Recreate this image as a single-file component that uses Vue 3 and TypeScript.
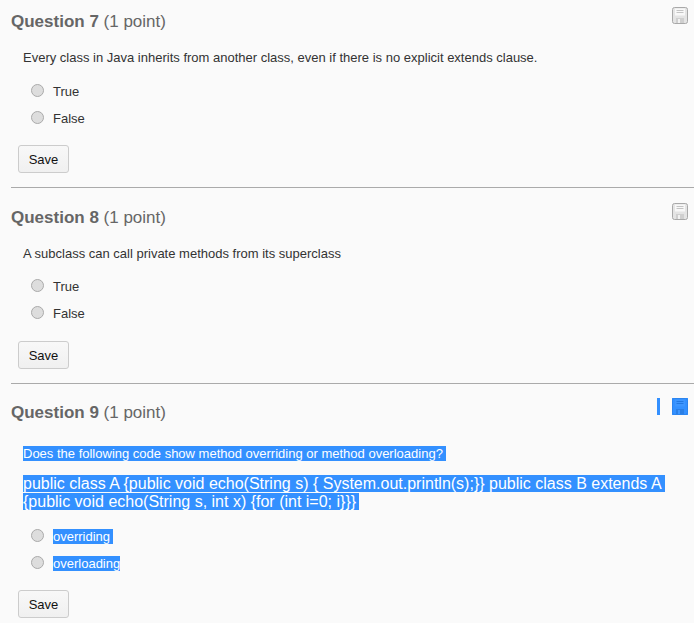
<script setup lang="ts">
interface Question {
  n: number
  text: string
  options: string[]
  selected: boolean
  code?: string
}
const questions: Question[] = [
  { n: 7, text: 'Every class in Java inherits from another class, even if there is no explicit extends clause.', options: ['True', 'False'], selected: false },
  { n: 8, text: 'A subclass can call private methods from its superclass', options: ['True', 'False'], selected: false },
  { n: 9, text: 'Does the following code show method overriding or method overloading?', code: 'public class A {public void echo(String s) { System.out.println(s);}} public class B extends A {public void echo(String s, int x) {for (int i=0; i}}}', options: ['overriding', 'overloading'], selected: true },
]
</script>

<template>
  <div class="page">
    <section v-for="q in questions" :key="q.n" class="question" :class="{ sel: q.selected }">
      <header class="head">
        <h3 class="title">Question {{ q.n }} <span class="pts">(1 point)</span></h3>
        <div class="tools">
          <span v-if="q.selected" class="caret"></span>
          <svg class="disk" width="16" height="17" viewBox="0 0 16 17">
            <rect x="0.5" y="0.5" width="15" height="16" rx="2" class="d-body" />
            <rect x="3" y="1.5" width="10" height="7" class="d-label" />
            <path d="M4.5 3.5h7M4.5 5.5h7" class="d-line" />
            <rect x="4" y="11" width="8" height="5" class="d-slot" />
            <rect x="6" y="12" width="2" height="4" class="d-shut" />
          </svg>
        </div>
      </header>
      <p class="text"><span class="hl">{{ q.text }}</span></p>
      <p v-if="q.code" class="code"><span class="hl">{{ q.code }}</span></p>
      <ul class="opts">
        <li v-for="o in q.options" :key="o" class="opt">
          <span class="radio"></span>
          <span class="hl label">{{ o }}</span>
        </li>
      </ul>
      <button class="save" type="button">Save</button>
    </section>
  </div>
</template>

<style scoped>
.page {
  width: 694px;
  height: 623px;
  overflow: hidden;
  background: #fafafa;
  font-family: "Liberation Sans", Arial, sans-serif;
  color: #333;
}
.question {
  margin-left: 11px;
  padding: 16px 0 14px;
  border-bottom: 1px solid #aaa;
}
.question:first-child {
  padding-top: 8px;
}
.question:first-child .opts {
  margin-top: 12px;
}
.question:first-child .save {
  margin-top: 13px;
}
.question.sel {
  padding-top: 15px;
  border-bottom: none;
}
.head {
  display: flex;
  justify-content: space-between;
  align-items: flex-start;
  height: 26px;
}
.title {
  margin: 0;
  font-size: 17px;
  line-height: 28px;
  font-weight: 700;
  color: #666;
}
.pts {
  font-weight: 400;
}
.tools {
  display: flex;
  align-items: center;
  gap: 12px;
  margin: -1px 6px 0 0;
}
.disk {
  display: block;
}
.d-body { fill: #e4e4e4; stroke: #a8a8a8; }
.d-label { fill: #f8f8f8; }
.d-line { stroke: #c4c4c4; stroke-width: 1; fill: none; }
.d-slot { fill: #cfcfcf; }
.d-shut { fill: #f2f2f2; }
.caret {
  width: 3px;
  height: 17px;
  background: #3390ff;
}
.sel .disk { background: #3390ff; }
.sel .disk .d-body { fill: #3390ff; stroke: #2c84ee; }
.sel .disk .d-label { fill: #3d96ff; }
.sel .disk .d-line { stroke: #2278e2; }
.sel .disk .d-slot { fill: #2a7fe6; }
.sel .disk .d-shut { fill: #3d96ff; }
.text {
  margin: 15px 0 0 12px;
  font-size: 13px;
  line-height: 17px;
}
.sel .text {
  margin-top: 20px;
}
.code {
  margin: 13px 0 0 12px;
  font-size: 16px;
  line-height: 18px;
  width: 650px;
}
.hl {
  padding-right: 3px;
}
.sel .hl {
  background: #3390ff;
  color: #fff;
  -webkit-box-decoration-break: clone;
  box-decoration-break: clone;
}
.opts {
  list-style: none;
  margin: 11px 0 0 20px;
  padding: 0;
}
.sel .code + .opts {
  margin-top: 12px;
}
.opt {
  display: flex;
  align-items: center;
  height: 27px;
  font-size: 13px;
}
.opt:last-child .label {
  padding-right: 0;
}
.radio {
  box-sizing: border-box;
  width: 13px;
  height: 13px;
  border-radius: 50%;
  background: #ddd;
  border: 1px solid #aaa;
  margin: -2px 9px 0 0;
}
.save {
  display: block;
  margin: 14px 0 0 7px;
  width: 51px;
  height: 28px;
  padding: 0;
  background: linear-gradient(#f8f8f8, #f0f0f0);
  border: 1px solid #ccc;
  border-radius: 3px;
  font: 13px "Liberation Sans", Arial, sans-serif;
  color: #111;
}
.sel .save {
  margin-top: 13px;
}
</style>
